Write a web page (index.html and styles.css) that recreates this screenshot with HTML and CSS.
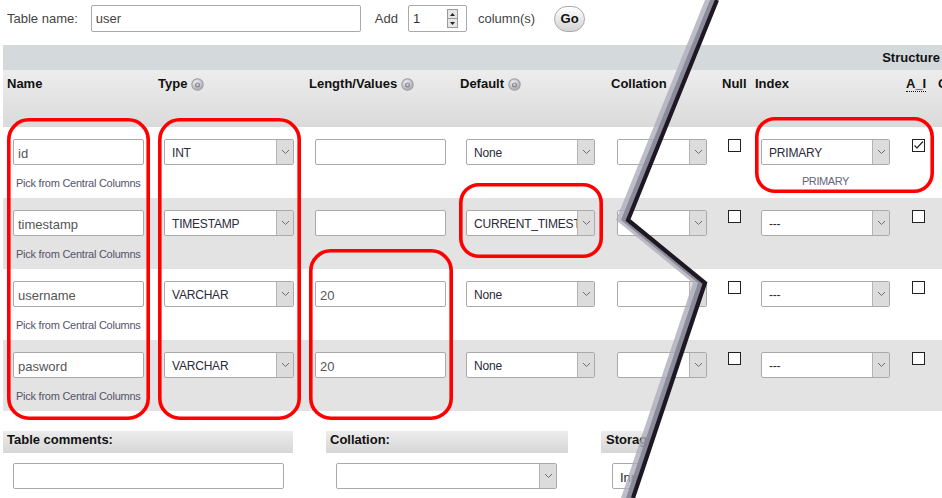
FILE: index.html
```html
<!DOCTYPE html>
<html lang="en">
<head>
<meta charset="utf-8">
<title>Create table - user</title>
<link rel="stylesheet" href="styles.css">
</head>
<body>
<div class="page">
  <div class="topbar">
    <span class="lbl">Table name:</span>
    <div class="txt tname">user</div>
    <span class="lbl add">Add</span>
    <div class="txt num"><span class="num-val">1</span><span class="spin"><span class="sp-up"><svg width="5" height="3" viewBox="0 0 5 3"><path d="M0 3 L2.5 0 L5 3 Z" fill="#222"/></svg></span><span class="sp-down"><svg width="5" height="3" viewBox="0 0 5 3"><path d="M0 0 L2.5 3 L5 0 Z" fill="#222"/></svg></span></span></div>
    <span class="lbl cols">column(s)</span>
    <div class="go">Go</div>
  </div>

  <div class="main">
    <div class="struct-band">Structure</div>
    <table class="grid">
      <colgroup>
        <col class="c-wide"><col class="c-wide"><col class="c-wide"><col class="c-wide">
        <col class="c-coll"><col class="c-null"><col class="c-wide"><col class="c-ai"><col class="c-wide">
      </colgroup>
      <thead>
        <tr>
          <th>Name</th>
          <th>Type<span class="help"><svg width="13" height="13" viewBox="0 0 13 13"><defs><radialGradient id="hg" cx="0.4" cy="0.35" r="0.7"><stop offset="0" stop-color="#f6f6f8"/><stop offset="1" stop-color="#a8a8b0"/></radialGradient></defs><circle cx="6.5" cy="6.5" r="6.2" fill="#9c9ca4"/><circle cx="6.5" cy="6.5" r="5.2" fill="url(#hg)"/><circle cx="6.5" cy="7" r="2.6" fill="#8c8c96"/><circle cx="6.5" cy="6.8" r="1.3" fill="#d0d0d6"/></svg></span></th>
          <th>Length/Values<span class="help"><svg width="13" height="13" viewBox="0 0 13 13"><circle cx="6.5" cy="6.5" r="6.2" fill="#9c9ca4"/><circle cx="6.5" cy="6.5" r="5.2" fill="url(#hg)"/><circle cx="6.5" cy="7" r="2.6" fill="#8c8c96"/><circle cx="6.5" cy="6.8" r="1.3" fill="#d0d0d6"/></svg></span></th>
          <th>Default<span class="help"><svg width="13" height="13" viewBox="0 0 13 13"><circle cx="6.5" cy="6.5" r="6.2" fill="#9c9ca4"/><circle cx="6.5" cy="6.5" r="5.2" fill="url(#hg)"/><circle cx="6.5" cy="7" r="2.6" fill="#8c8c96"/><circle cx="6.5" cy="6.8" r="1.3" fill="#d0d0d6"/></svg></span></th>
          <th>Collation</th>
          <th>Null</th>
          <th>Index</th>
          <th><abbr class="ai" title="AUTO_INCREMENT">A_I</abbr></th>
          <th>Comments</th>
        </tr>
      </thead>
      <tbody>
        <tr class="odd">
          <td><div class="txt field">id</div><div class="pick">Pick from Central Columns</div></td>
          <td><div class="sel w130"><span class="sel-text">INT</span><span class="sel-btn"><svg width="9" height="6" viewBox="0 0 9 6"><path d="M1 1 L4.5 4.5 L8 1" fill="none" stroke="#6b6b78" stroke-width="1"/></svg></span></div></td>
          <td><div class="txt field"></div></td>
          <td><div class="sel w129"><span class="sel-text">None</span><span class="sel-btn"><svg width="9" height="6" viewBox="0 0 9 6"><path d="M1 1 L4.5 4.5 L8 1" fill="none" stroke="#6b6b78" stroke-width="1"/></svg></span></div></td>
          <td><div class="sel w90"><span class="sel-text"></span><span class="sel-btn"><svg width="9" height="6" viewBox="0 0 9 6"><path d="M1 1 L4.5 4.5 L8 1" fill="none" stroke="#6b6b78" stroke-width="1"/></svg></span></div></td>
          <td><div class="cb"></div></td>
          <td><div class="sel w129"><span class="sel-text">PRIMARY</span><span class="sel-btn"><svg width="9" height="6" viewBox="0 0 9 6"><path d="M1 1 L4.5 4.5 L8 1" fill="none" stroke="#6b6b78" stroke-width="1"/></svg></span></div><div class="idx-name">PRIMARY</div></td>
          <td><div class="cb"><svg width="11" height="11" viewBox="0 0 11 11"><path d="M1.5 5.5 L4 8 L10 1.5" fill="none" stroke="#222" stroke-width="1.2"/></svg></div></td>
          <td></td>
        </tr>
        <tr class="even">
          <td><div class="txt field">timestamp</div><div class="pick">Pick from Central Columns</div></td>
          <td><div class="sel w130"><span class="sel-text">TIMESTAMP</span><span class="sel-btn"><svg width="9" height="6" viewBox="0 0 9 6"><path d="M1 1 L4.5 4.5 L8 1" fill="none" stroke="#6b6b78" stroke-width="1"/></svg></span></div></td>
          <td><div class="txt field"></div></td>
          <td><div class="sel w129"><span class="sel-text">CURRENT_TIMESTAMP</span><span class="sel-btn"><svg width="9" height="6" viewBox="0 0 9 6"><path d="M1 1 L4.5 4.5 L8 1" fill="none" stroke="#6b6b78" stroke-width="1"/></svg></span></div></td>
          <td><div class="sel w90"><span class="sel-text"></span><span class="sel-btn"><svg width="9" height="6" viewBox="0 0 9 6"><path d="M1 1 L4.5 4.5 L8 1" fill="none" stroke="#6b6b78" stroke-width="1"/></svg></span></div></td>
          <td><div class="cb"></div></td>
          <td><div class="sel w129"><span class="sel-text">---</span><span class="sel-btn"><svg width="9" height="6" viewBox="0 0 9 6"><path d="M1 1 L4.5 4.5 L8 1" fill="none" stroke="#6b6b78" stroke-width="1"/></svg></span></div></td>
          <td><div class="cb"></div></td>
          <td></td>
        </tr>
        <tr class="odd">
          <td><div class="txt field">username</div><div class="pick">Pick from Central Columns</div></td>
          <td><div class="sel w130"><span class="sel-text">VARCHAR</span><span class="sel-btn"><svg width="9" height="6" viewBox="0 0 9 6"><path d="M1 1 L4.5 4.5 L8 1" fill="none" stroke="#6b6b78" stroke-width="1"/></svg></span></div></td>
          <td><div class="txt field">20</div></td>
          <td><div class="sel w129"><span class="sel-text">None</span><span class="sel-btn"><svg width="9" height="6" viewBox="0 0 9 6"><path d="M1 1 L4.5 4.5 L8 1" fill="none" stroke="#6b6b78" stroke-width="1"/></svg></span></div></td>
          <td><div class="sel w90"><span class="sel-text"></span><span class="sel-btn"><svg width="9" height="6" viewBox="0 0 9 6"><path d="M1 1 L4.5 4.5 L8 1" fill="none" stroke="#6b6b78" stroke-width="1"/></svg></span></div></td>
          <td><div class="cb"></div></td>
          <td><div class="sel w129"><span class="sel-text">---</span><span class="sel-btn"><svg width="9" height="6" viewBox="0 0 9 6"><path d="M1 1 L4.5 4.5 L8 1" fill="none" stroke="#6b6b78" stroke-width="1"/></svg></span></div></td>
          <td><div class="cb"></div></td>
          <td></td>
        </tr>
        <tr class="even">
          <td><div class="txt field">pasword</div><div class="pick">Pick from Central Columns</div></td>
          <td><div class="sel w130"><span class="sel-text">VARCHAR</span><span class="sel-btn"><svg width="9" height="6" viewBox="0 0 9 6"><path d="M1 1 L4.5 4.5 L8 1" fill="none" stroke="#6b6b78" stroke-width="1"/></svg></span></div></td>
          <td><div class="txt field">20</div></td>
          <td><div class="sel w129"><span class="sel-text">None</span><span class="sel-btn"><svg width="9" height="6" viewBox="0 0 9 6"><path d="M1 1 L4.5 4.5 L8 1" fill="none" stroke="#6b6b78" stroke-width="1"/></svg></span></div></td>
          <td><div class="sel w90"><span class="sel-text"></span><span class="sel-btn"><svg width="9" height="6" viewBox="0 0 9 6"><path d="M1 1 L4.5 4.5 L8 1" fill="none" stroke="#6b6b78" stroke-width="1"/></svg></span></div></td>
          <td><div class="cb"></div></td>
          <td><div class="sel w129"><span class="sel-text">---</span><span class="sel-btn"><svg width="9" height="6" viewBox="0 0 9 6"><path d="M1 1 L4.5 4.5 L8 1" fill="none" stroke="#6b6b78" stroke-width="1"/></svg></span></div></td>
          <td><div class="cb"></div></td>
          <td></td>
        </tr>
      </tbody>
    </table>

    <div class="bottom">
      <div class="bblock b1">
        <div class="band">Table comments:</div>
        <div class="bfield"><div class="txt field wcomment"></div></div>
      </div>
      <div class="bblock b2">
        <div class="band">Collation:</div>
        <div class="bfield"><div class="sel w221"><span class="sel-text"></span><span class="sel-btn"><svg width="9" height="6" viewBox="0 0 9 6"><path d="M1 1 L4.5 4.5 L8 1" fill="none" stroke="#6b6b78" stroke-width="1"/></svg></span></div></div>
      </div>
      <div class="bblock b3">
        <div class="band band3">Storage Engine:</div>
        <div class="bfield b3field"><div class="sel w130"><span class="sel-text dark">InnoDB</span><span class="sel-btn"><svg width="9" height="6" viewBox="0 0 9 6"><path d="M1 1 L4.5 4.5 L8 1" fill="none" stroke="#6b6b78" stroke-width="1"/></svg></span></div></div>
      </div>
    </div>
  </div>

  <svg class="overlay" width="942" height="498" viewBox="0 0 942 498">
    <polygon points="661.8,412 942,412 942,498 633,498" fill="#ffffff"/>
    <g fill="none" stroke="#ff0000" stroke-width="3.6">
      <rect x="8.8" y="119.8" width="139.4" height="298.4" rx="20"/>
      <rect x="159.8" y="119.8" width="139.4" height="298.4" rx="20"/>
      <rect x="310.8" y="250.8" width="140.4" height="167.4" rx="20"/>
      <rect x="460.8" y="184.8" width="140.4" height="71.4" rx="18"/>
      <rect x="756.8" y="118.8" width="175.4" height="72.4" rx="18"/>
    </g>
    <polygon points="717,0 628,220 705,283 633,498 621,498 693,283 616,220 705,0" fill="#aeaebc" fill-opacity="0.8"/>
    <polygon points="717,0 628,220 705,283 633,498 626,498 698,283 621,220 710,0" fill="#858596" fill-opacity="0.9"/>
    <polyline points="717,0 628,220 705,283 633,498" fill="none" stroke="#1e1822" stroke-width="4.2" stroke-linejoin="miter"/>
  </svg>
</div>
</body>
</html>
```
FILE: styles.css
```css
body {
  margin: 0;
}

.page {
  position: relative;
  width: 942px;
  height: 498px;
  overflow: hidden;
  background: #fff;
  font-family: "Liberation Sans", Arial, sans-serif;
  font-size: 13px;
  color: #333;
}

/* top bar */
.topbar {
  display: flex;
  align-items: center;
  height: 27px;
  padding: 5px 0 13px 7px;
}

.lbl {
  color: #444;
}

.txt {
  box-sizing: border-box;
  height: 27px;
  border: 1px solid #aaa;
  border-radius: 2px;
  background: #fff;
  padding-left: 4px;
  line-height: 26px;
  color: #555;
  white-space: nowrap;
  overflow: hidden;
}

.tname {
  width: 270px;
  margin-left: 13px;
  color: #444;
}

.add {
  margin-left: 14px;
}

.num {
  display: flex;
  align-items: center;
  width: 59px;
  margin-left: 10px;
  color: #333;
}

.num-val {
  flex: 1;
}

.spin {
  display: flex;
  flex-direction: column;
  width: 11px;
  height: 19px;
  margin-right: 8px;
  border: 1px solid #9a9a9a;
  background: #e6e6e6;
  box-sizing: border-box;
}

.sp-up,
.sp-down {
  flex: 1;
  display: flex;
  align-items: center;
  justify-content: center;
}

.sp-up {
  border-bottom: 1px solid #9a9a9a;
}

.cols {
  margin-left: 11px;
}

.go {
  box-sizing: border-box;
  width: 31px;
  height: 26px;
  margin-left: 19px;
  border: 1px solid #aaa;
  border-radius: 13px;
  background: linear-gradient(#ffffff, #d2d2d2);
  font-weight: bold;
  color: #111;
  text-align: center;
  line-height: 24px;
}

/* main table */
.main {
  margin-left: 3px;
}

.struct-band {
  height: 25px;
  line-height: 25px;
  background: #d4d9dc;
  text-align: right;
  padding-right: 2px;
  font-weight: bold;
  color: #111;
}

.grid {
  border-collapse: collapse;
  table-layout: fixed;
  width: 1082px;
}

.c-wide { width: 151px; }
.c-coll { width: 111px; }
.c-null { width: 33px; }
.c-ai { width: 32px; }

.grid thead tr {
  height: 57px;
}

.grid th {
  text-align: left;
  vertical-align: top;
  padding: 6px 0 0 4px;
  line-height: 16px;
  font-weight: bold;
  color: #111;
  white-space: nowrap;
  overflow: hidden;
  background: linear-gradient(#ededed, #dadada);
}

.help {
  display: inline-block;
  width: 13px;
  height: 13px;
  margin-left: 4px;
  vertical-align: -3px;
}

.help svg {
  display: block;
}

.ai {
  text-decoration: none;
  border-bottom: 1px dotted #111;
}

.grid tbody tr {
  height: 71px;
}

.odd {
  background: #fff;
}

.even {
  background: #e3e3e3;
}

.grid td {
  vertical-align: top;
  padding: 12px 0 0 10px;
}

.field {
  width: 131px;
  height: 26px;
  line-height: 26px;
  padding-top: 1px;
}

.pick {
  margin-top: 11px;
  padding-left: 3px;
  font-size: 11px;
  letter-spacing: -0.25px;
  line-height: 14px;
  color: #54546a;
  white-space: nowrap;
}

.sel {
  display: flex;
  box-sizing: border-box;
  height: 26px;
  border: 1px solid #aaa;
  border-radius: 2px;
  background: #fff;
}

.w130 { width: 130px; }
.w129 { width: 129px; }
.w90 { width: 90px; }
.w221 { width: 221px; }

.sel-text {
  flex: 1;
  min-width: 0;
  padding: 1px 0 0 7px;
  font-size: 12px;
  letter-spacing: -0.2px;
  line-height: 25px;
  white-space: nowrap;
  overflow: hidden;
  color: #2a2a3a;
}

.sel-text.dark {
  font-size: 13px;
  letter-spacing: 0;
  color: #222;
}

.sel-btn {
  display: flex;
  align-items: center;
  justify-content: center;
  width: 16px;
  background: #dcdcdc;
  border-left: 1px solid #b4b4b4;
}

.cb {
  box-sizing: border-box;
  width: 13px;
  height: 13px;
  border: 1px solid #222;
  background: #fff;
}

.cb svg {
  display: block;
}

.idx-name {
  width: 129px;
  margin-top: 9px;
  text-align: center;
  font-size: 11px;
  letter-spacing: -0.4px;
  line-height: 14px;
  color: #66667a;
}

/* bottom section */
.bottom {
  display: flex;
  gap: 33px;
  margin-top: 20px;
}

.b1 { width: 290px; }
.b2 { width: 242px; }
.b3 { width: 300px; }

.band {
  box-sizing: border-box;
  height: 22px;
  padding-left: 4px;
  line-height: 18px;
  font-weight: bold;
  color: #111;
  white-space: nowrap;
  background: linear-gradient(#ececec, #d6d6d6);
}

.band3 {
  padding-left: 5px;
}

.bfield {
  margin: 10px 0 0 10px;
}

.b3field {
  margin-left: 11px;
}

.wcomment {
  width: 271px;
}

/* torn-edge and annotation overlay */
.overlay {
  position: absolute;
  left: 0;
  top: 0;
  pointer-events: none;
}
```
